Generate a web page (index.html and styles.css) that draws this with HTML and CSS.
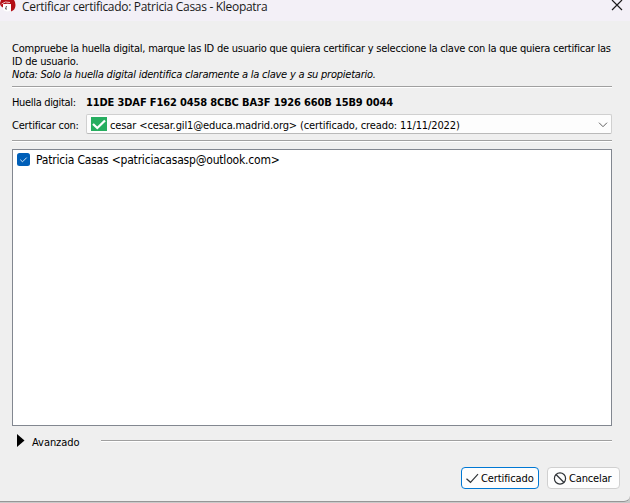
FILE: index.html
```html
<!DOCTYPE html>
<html lang="es">
<head>
<meta charset="utf-8">
<title>Certificar certificado: Patricia Casas - Kleopatra</title>
<link rel="stylesheet" href="styles.css">
</head>
<body>
<main class="window">
  <header class="titlebar">
    <svg class="app-icon" width="16" height="13" viewBox="0 0 16 13"><path d="M1 0H14Q15.500 2 15.500 5Q15.500 10 11 11.500V4H3V7.500Q0 6 0 3Z" fill="#b40f17"/><path d="M3 5Q7 3 11 4.500V9.500Q10 11.500 7 11.500Q4 11 3 9Z" fill="#fff"/><path d="M1.500 4Q5 .7 10 2.500" fill="none" stroke="#f0c4c7"/><path d="M6.500 6L5.500 9H7" fill="none" stroke="#555"/></svg>
    <h1 class="title">Certificar certificado: Patricia Casas - Kleopatra</h1>
    <svg class="close" width="12" height="12" viewBox="0 0 12 12"><path d="M1 1L11 11M11 1L1 11" fill="none" stroke="#1c1c1c" stroke-width="1.200"/></svg>
  </header>
  <section class="content">
    <div class="intro">
      <p class="line-one">Compruebe la huella digital, marque las ID de usuario que quiera certificar y seleccione la clave con la que quiera certificar las</p>
      <p class="line-two">ID de usuario.</p>
      <p class="note">Nota: Solo la huella digital identifica claramente a la clave y a su propietario.</p>
    </div>
    <div class="rule"></div>
    <div class="row fingerprint"><span class="label">Huella digital:</span><strong>11DE 3DAF F162 0458 8CBC BA3F 1926 660B 15B9 0044</strong></div>
    <div class="row key"><span class="label key-label">Certificar con:</span>
      <div class="select">
        <svg class="valid" width="16" height="14" viewBox="0 0 16 14"><path d="M0 0H16V14H0Z" fill="#27ae60"/><path d="M2 7L6.300 11L14 3.500" fill="none" stroke="#fff" stroke-width="2.300"/></svg>
        <span class="select-text">cesar &lt;cesar.gil1@educa.madrid.org&gt; (certificado, creado: 11/11/2022)</span>
        <svg class="chevron" width="10" height="6" viewBox="0 0 10 6"><path d="M1 .7L5 4.700L9 .7" fill="none" stroke="#606060"/></svg>
      </div>
    </div>
    <div class="rule"></div>
    <div class="list">
      <div class="item">
        <svg class="checkbox" width="13" height="13" viewBox="0 0 13 13"><rect width="13" height="13" rx="2.500" fill="#005fb8"/><path d="M3.300 6.700L5.500 8.800L9.700 4.600" fill="none" stroke="#d7e8f7"/></svg>
        <span class="item-text">Patricia Casas &lt;patriciacasasp@outlook.com&gt;</span>
      </div>
    </div>
    <div class="advanced">
      <svg width="8" height="13" viewBox="0 0 8 13"><path d="M0 0L7.500 6.500L0 13Z" fill="#000"/></svg>
      <span class="advanced-text">Avanzado</span>
      <div class="rule"></div>
    </div>
  </section>
  <footer class="actions">
    <button class="button primary"><svg width="14" height="12" viewBox="0 0 14 12"><path d="M.5 5.800L4.500 9.300L12 1.200" fill="none" stroke="#303438" stroke-width="1.200"/></svg><span class="ok-text">Certificado</span></button>
    <button class="button"><svg width="14" height="14" viewBox="0 0 14 14"><circle cx="7" cy="6.500" r="5.600" fill="none" stroke="#303438" stroke-width="1.200"/><path d="M3 2.500L11 10.500" stroke="#303438" stroke-width="1.200"/></svg><span class="cancel-text">Cancelar</span></button>
  </footer>
</main>
</body>
</html>
```

FILE: styles.css
```css
* { box-sizing: border-box; }
body { margin: 0; width: 630px; height: 503px; overflow: hidden; background: #c9c9c9; font: 11px/13px "DejaVu Sans Condensed", "DejaVu Sans", sans-serif; font-stretch: condensed; color: #000; }
p, h1 { margin: 0; }
span, p, h1, strong { white-space: nowrap; }
svg { display: block; flex: none; }
.window { display: flex; flex-direction: column; height: 502px; background: #efefef; border-bottom: 1px solid #969696; border-bottom-right-radius: 6px; }
.titlebar { display: flex; height: 21px; background: #f3f0f7; }
.title { padding-left: 6px; font: 12px/13px "Open Sans", sans-serif; letter-spacing: -.3px; color: #1a1a1a; }
.close { margin: -1px 7px 0 auto; }
.content { padding: 21px 18px 0 12px; }
.intro { height: 44px; }
.line-one { letter-spacing: -.243px; }
.line-two { letter-spacing: -.17px; }
.note { font-style: italic; letter-spacing: -.232px; }
.rule { height: 2px; border-top: 1px solid #a0a0a0; border-bottom: 1px solid #fff; }
.row { display: flex; align-items: center; }
.fingerprint { height: 26px; padding-top: 3px; }
.fingerprint strong { letter-spacing: -.135px; }
.label { width: 74px; flex: none; letter-spacing: -.33px; }
.key-label { padding-top: 2px; letter-spacing: -.2px; }
.key { height: 20px; }
.select { display: flex; align-items: center; flex: 1; height: 20px; padding: 0 4px; background: #fdfdfd; border: 1px solid #d0d0d0; border-bottom-color: #bababa; border-radius: 2px; }
.select-text { padding-top: 2px; margin-left: 3px; letter-spacing: -.12px; }
.chevron { margin: 2px -1px 0 auto; }
.key + .rule { margin-top: 6px; }
.list { height: 277px; margin-top: 7px; padding: 3px 4px; background: #fff; border: 1px solid #828790; }
.item { display: flex; align-items: center; height: 13px; }
.item-text { margin-left: 6px; font: 12px/14px "DejaVu Sans Condensed", "DejaVu Sans", sans-serif; letter-spacing: -.2px; }
.advanced { display: flex; align-items: center; height: 13px; margin-top: 8px; padding-left: 5px; }
.advanced-text { width: 69px; margin: 3px 0 0 7px; flex: none; letter-spacing: -.05px; }
.advanced .rule { flex: 1; }
.actions { display: flex; justify-content: flex-end; gap: 8px; margin-top: 20px; padding-right: 10px; }
.button { display: flex; align-items: center; width: 73px; height: 22px; padding: 1px 0 0 5px; gap: 2px; font: inherit; color: #000; background: #fdfdfd; border: 1px solid #d0d0d0; border-radius: 4px; }
.button.primary { width: 78px; padding-left: 4px; gap: 1px; border-color: #0078d4; }
.ok-text { letter-spacing: -.1px; }
.cancel-text { letter-spacing: -.15px; }
```
